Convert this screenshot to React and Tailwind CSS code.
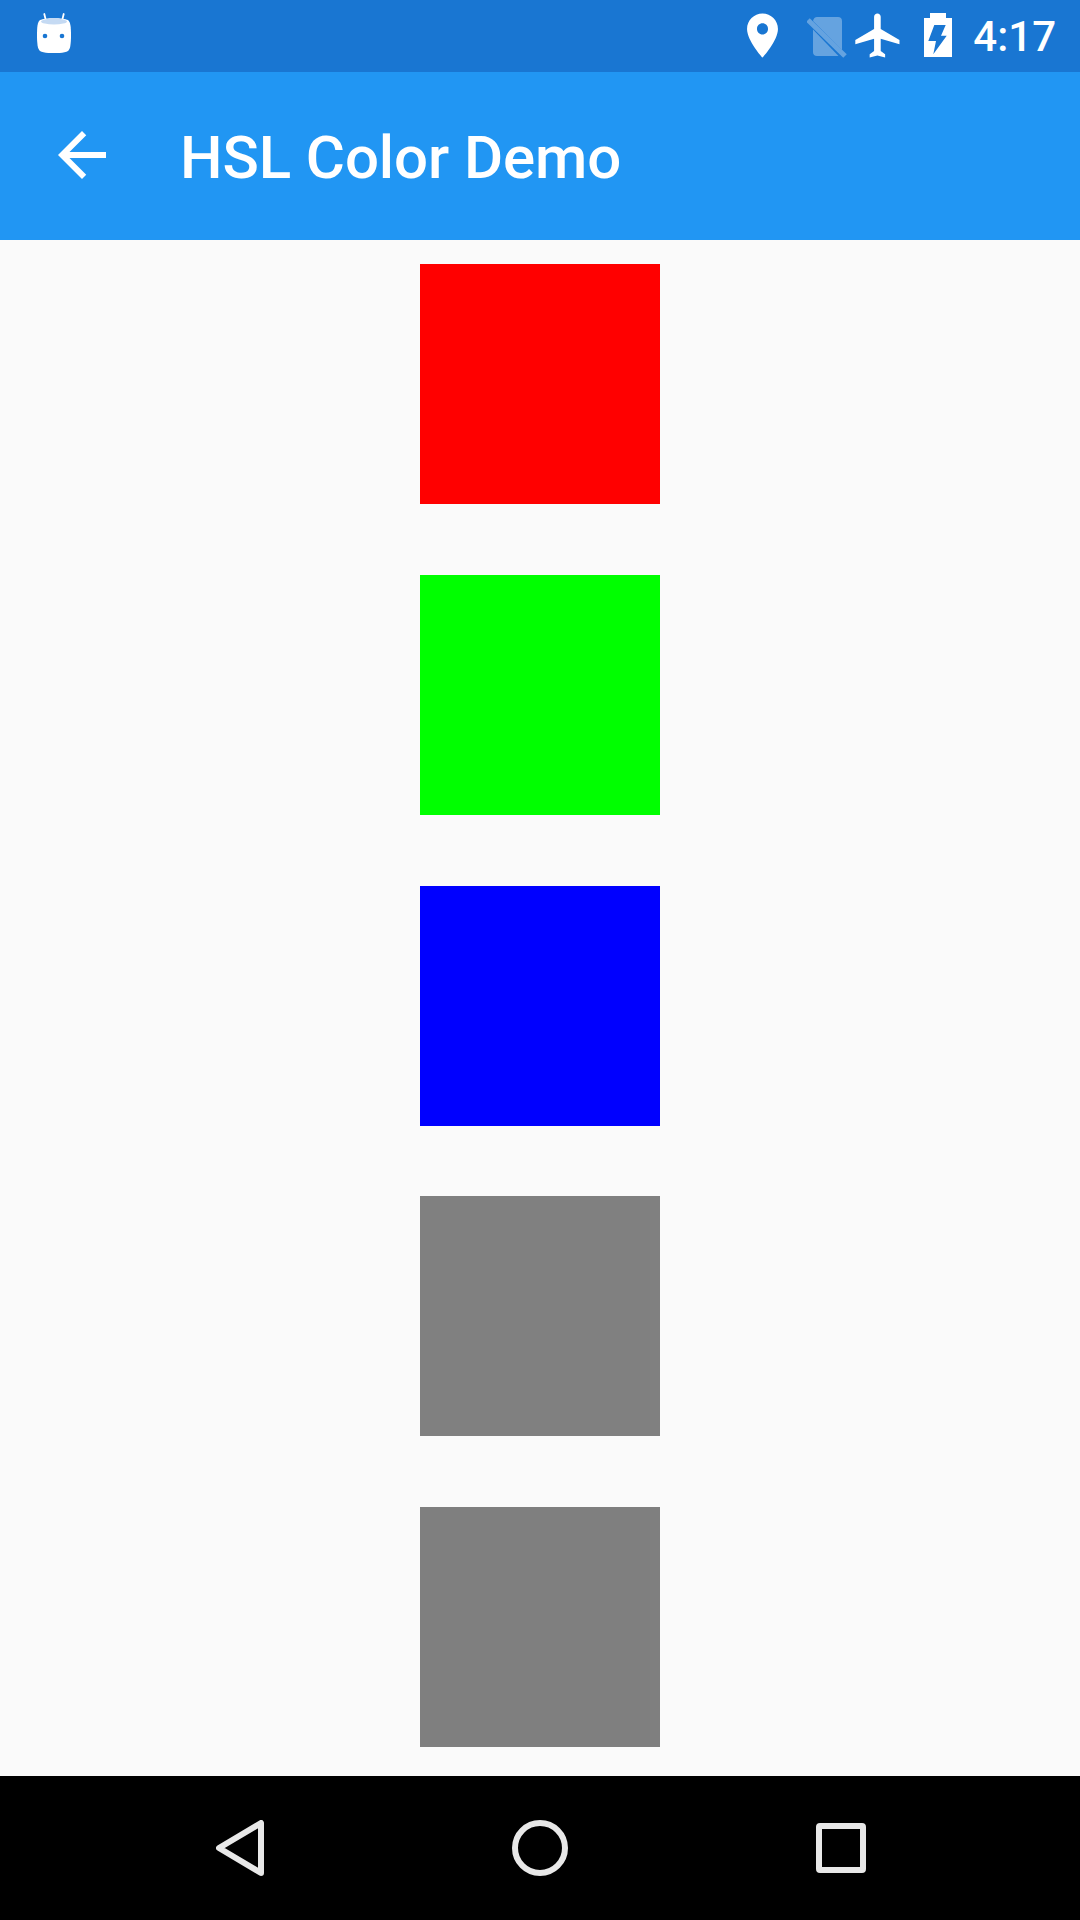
const SQUARES = ['bg-[#ff0000]', 'bg-[#00ff00]', 'bg-[#0000ff]', 'bg-[#808080]', 'bg-[#7f7f7f]'];

function AndroidHead() {
  return (
    <svg width="34" height="40" viewBox="0 0 34 40" className="-mt-[6px]">
      <path d="M7.300 1l1.700 7M26.700 1L25 8" stroke="#fff" strokeWidth="1.800" strokeLinecap="round" />
      <path d="M3 7C8 4.500 26 4.500 31 7c2.500 2 3 7 3 15s-.5 14-3 16c-5 3-23 3-28 0-2.500-2-3-8-3-16S.5 9 3 7z" fill="#fff" />
      <ellipse cx="17" cy="8.500" rx="13" ry="3" fill="#c5daf3" />
      <circle cx="8" cy="23" r="2.300" fill="#1976d2" />
      <circle cx="25" cy="23" r="2.300" fill="#1976d2" />
    </svg>
  );
}

function StatusIcons() {
  return (
    <div className="flex items-center">
      <svg width="53" height="53" viewBox="0 0 24 24" fill="#fff" className="-mt-[2px]">
        <path d="M12 2C8.130 2 5 5.130 5 9c0 5.250 7 13 7 13s7-7.750 7-13c0-3.870-3.130-7-7-7zm0 9.500c-1.380 0-2.500-1.120-2.500-2.500s1.120-2.500 2.500-2.500 2.500 1.120 2.500 2.500-1.120 2.500-2.500 2.500z" />
      </svg>
      <svg width="40" height="41" viewBox="0 0 40 41" fill="#fff" className="ml-[18px] mt-[2px]">
        <g opacity="0.33">
          <path d="M10 0h21c2.500 0 4 1.500 4 4v29L6 4c.5-2.500 2-4 4-4z" />
          <path d="M6 12.500L31.500 39H10c-2.500 0-4-1.500-4-4z" />
          <path d="M1 3l37 36" stroke="#fff" strokeWidth="5" />
        </g>
      </svg>
      <svg width="53" height="53" viewBox="0 0 24 24" fill="#fff" className="-mt-[1px] ml-[5.500px]">
        <path d="M21.500 16v-2l-8.500-5V3.500c0-.83-.67-1.500-1.500-1.500S10 2.670 10 3.500V9l-8.500 5v2l8.500-2.500V19l-2 1.500V22l3.500-1 3.500 1v-1.500L13 19v-5.500z" />
      </svg>
      <svg width="28" height="44" viewBox="0 0 28 44" fill="#fff" className="-mt-[2px] ml-[19px]">
        <path fillRule="evenodd" d="M6 0h16v5h6v39H0V5h6zM10.300 12h11.400L17 22.700h5.700L9.300 41.300 12 28H4.300z" />
      </svg>
      <span className="ml-[21px] mt-[2px] text-[42px] font-medium leading-none text-white">4:17</span>
    </div>
  );
}

function NavBar() {
  return (
    <div className="flex h-[144px] items-center justify-center gap-[248px] bg-black pl-[2px]">
      <svg width="48" height="56" viewBox="0 0 48 56" fill="none" stroke="#e8e8e8" strokeWidth="6" strokeLinejoin="round">
        <path d="M45 3v50L3 28z" />
      </svg>
      <svg width="56" height="56" viewBox="0 0 56 56" fill="none" stroke="#e8e8e8" strokeWidth="6">
        <circle cx="28" cy="28" r="25" />
      </svg>
      <div className="h-[50px] w-[50px] rounded-[4px] border-[6px] border-[#e8e8e8]" />
    </div>
  );
}

export default function App() {
  return (
    <div className="flex h-[1920px] w-[1080px] flex-col bg-[#fafafa] font-['Roboto',sans-serif]">
      <div className="flex h-[72px] items-center justify-between bg-[#1976d2] pl-[37px] pr-[24px]">
        <AndroidHead />
        <StatusIcons />
      </div>
      <div className="flex h-[168px] items-center bg-[#2196f3] pl-[46px]">
        <svg width="72" height="72" viewBox="0 0 24 24" fill="#fff" className="-mt-[2px]">
          <path d="M20 11H7.830l5.590-5.590L12 4l-8 8 8 8 1.410-1.410L7.830 13H20v-2z" />
        </svg>
        <h1 className="ml-[62px] mt-[4px] text-[60px] font-medium leading-none tracking-[-0.1px] text-white">HSL Color Demo</h1>
      </div>
      <div className="flex flex-1 flex-col items-center gap-[70.75px] pt-[24px]">
        {SQUARES.map((c, i) => (
          <div key={i} className={`h-[240px] w-[240px] shrink-0 ${c}`} />
        ))}
      </div>
      <NavBar />
    </div>
  );
}
